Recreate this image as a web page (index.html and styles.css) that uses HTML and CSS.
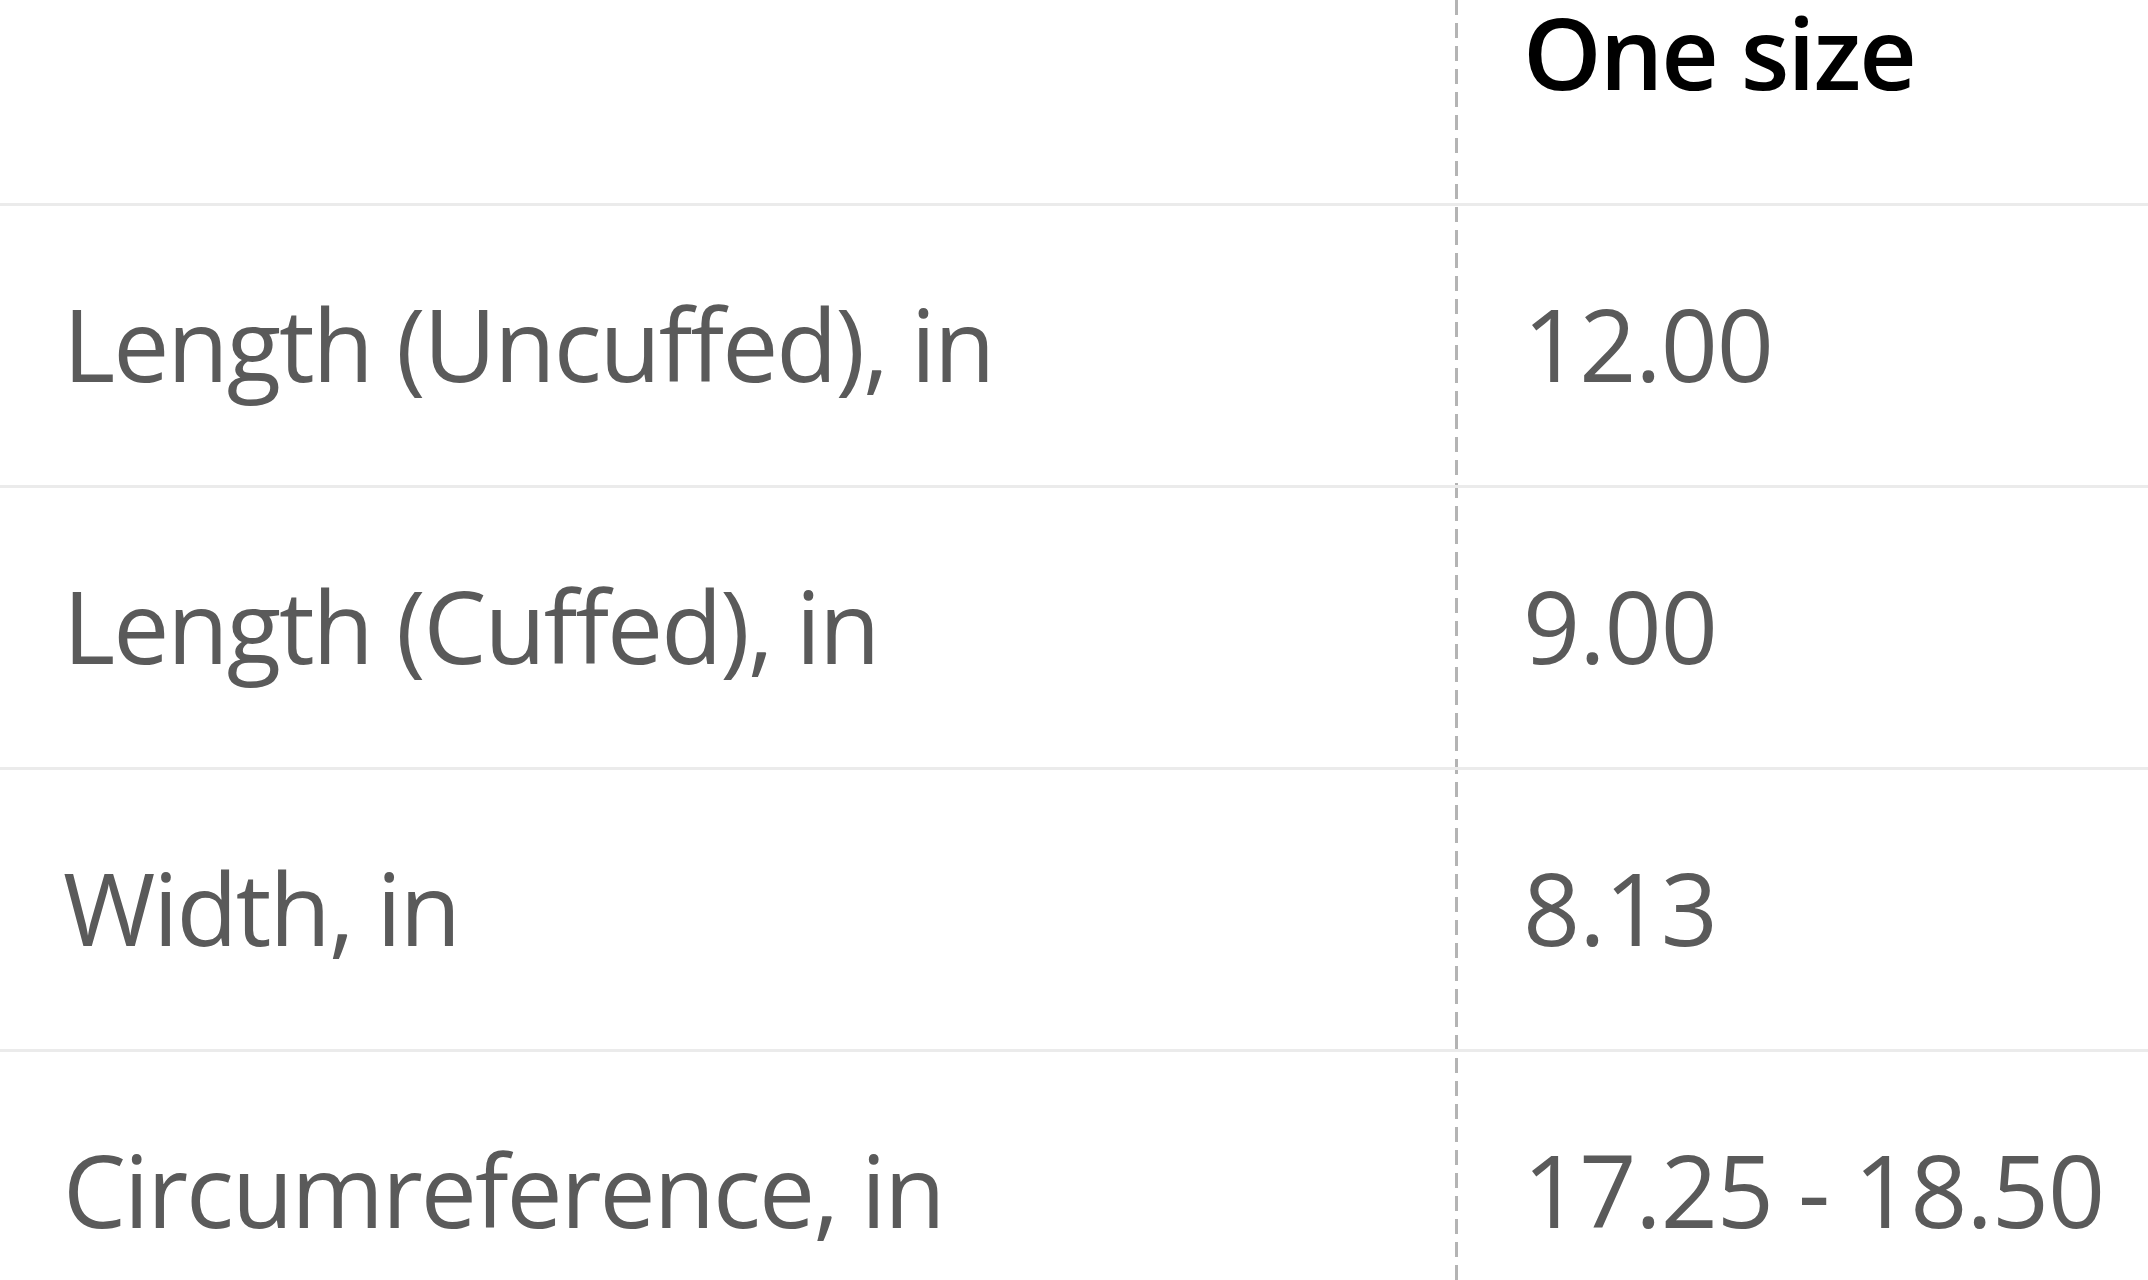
FILE: index.html
```html
<!DOCTYPE html>
<html lang="en">
<head>
<meta charset="utf-8">
<title>Size chart</title>
<link rel="stylesheet" href="styles.css">
</head>
<body>
<table class="size-table">
  <thead>
    <tr class="head-row">
      <th class="label-cell"></th>
      <th class="value-cell">One size</th>
    </tr>
  </thead>
  <tbody>
    <tr class="body-row">
      <td class="label-cell">Length (Uncuffed), in</td>
      <td class="value-cell">12.00</td>
    </tr>
    <tr class="body-row">
      <td class="label-cell">Length (Cuffed), in</td>
      <td class="value-cell">9.00</td>
    </tr>
    <tr class="body-row">
      <td class="label-cell">Width, in</td>
      <td class="value-cell">8.13</td>
    </tr>
    <tr class="body-row">
      <td class="label-cell">Circumreference, in</td>
      <td class="value-cell">17.25 - 18.50</td>
    </tr>
  </tbody>
</table>
</body>
</html>
```
FILE: styles.css
```css
html, body {
  margin: 0;
  padding: 0;
  background: #ffffff;
}

body {
  width: 2148px;
  height: 1280px;
  overflow: hidden;
  font-family: "Open Sans", "Noto Sans", sans-serif;
}

.size-table {
  width: 2148px;
  border-collapse: collapse;
  table-layout: fixed;
  background-image: repeating-linear-gradient(to bottom, #b4b4b4 0 15px, transparent 15px 23px);
  background-size: 3px 23px;
  background-position: 1455px 0;
  background-repeat: repeat-y;
}

.label-cell {
  width: 1456px;
  padding: 0 0 0 63px;
  text-align: left;
  box-sizing: border-box;
}

.value-cell {
  padding: 0 0 0 67px;
  text-align: left;
}

.head-row th {
  height: 204px;
  vertical-align: top;
  padding-top: 1px;
  font-size: 100px;
  line-height: 100px;
  font-weight: 600;
  letter-spacing: -2px;
  color: #000000;
  border-bottom: 3px solid #ebebeb;
  box-sizing: border-box;
}

.body-row td {
  height: 282px;
  vertical-align: top;
  padding-top: 87px;
  font-size: 100px;
  line-height: 100px;
  font-weight: 400;
  letter-spacing: -1px;
  color: #5a5a5a;
  border-bottom: 3px solid #ebebeb;
  box-sizing: border-box;
}

.body-row td.label-cell {
  letter-spacing: -2px;
}
```
